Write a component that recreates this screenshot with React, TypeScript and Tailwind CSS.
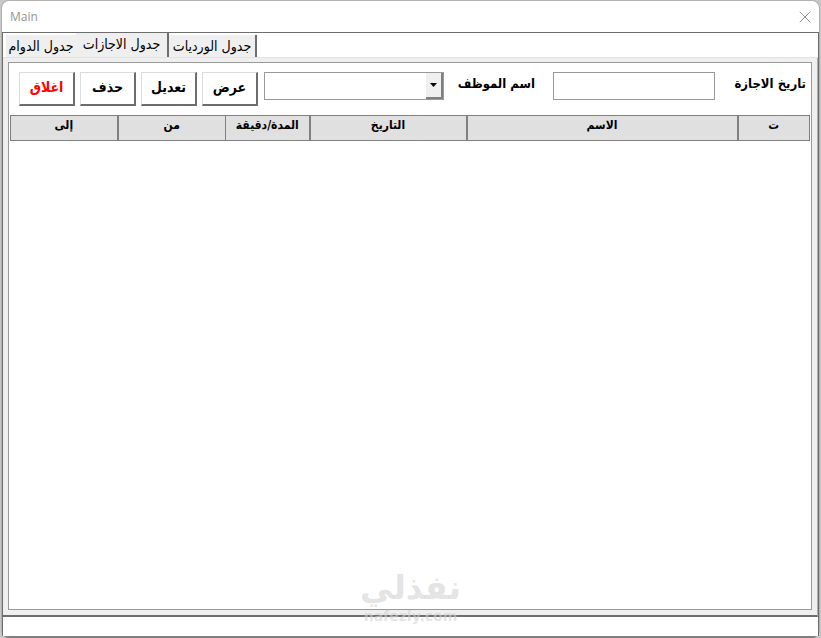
import { X } from "lucide-react";

const tabs = [
  { label: "جدول الدوام", active: false },
  { label: "جدول الاجازات", active: true },
  { label: "جدول الورديات", active: false },
];

const columns = [
  { label: "ت", className: "w-[72px] border-l-2" },
  { label: "الاسم", className: "w-auto border-l-2" },
  { label: "التاريخ", className: "w-[157px] border-l-2" },
  { label: "المدة/دقيقة", className: "w-[84px]" },
  { label: "من", className: "w-[108px] border-l-2" },
  { label: "إلى", className: "w-[107px]" },
];

function TitleBar() {
  return (
    <header className="flex h-[31px] items-center justify-between pr-1 pl-2">
      <h1 className="font-['Open_Sans',sans-serif] text-xs text-[#949494]">Main</h1>
      <button type="button" aria-label="Close" className="text-[#808080]">
        <X size={20} strokeWidth={1} />
      </button>
    </header>
  );
}

function Tabs() {
  return (
    <div role="tablist" className="flex h-[25px] items-end border-b border-[#e2e2e2] pl-[3px]">
      {tabs.map((tab) => (
        <button
          key={tab.label}
          type="button"
          role="tab"
          aria-selected={tab.active}
          dir="rtl"
          className={
            tab.active
              ? "h-6 w-[93px] border-r-2 border-[#6d6d6d] bg-[#efefef] pb-0.5 text-sm leading-4 whitespace-nowrap"
              : "h-[22px] w-[70px] bg-[#efefef] text-sm leading-4 whitespace-nowrap last:w-[88px] last:border-r-2 last:border-[#6d6d6d]"
          }
        >
          {tab.label}
        </button>
      ))}
    </div>
  );
}

function ToolButton({ label, danger }: { label: string; danger?: boolean }) {
  return (
    <button
      type="button"
      className={`h-[34px] w-14 shrink-0 border-t border-r-2 border-b-2 border-l border-t-[#dcdcdc] border-r-[#6d6d6d] border-b-[#6d6d6d] border-l-[#dcdcdc] bg-white pb-1 text-sm leading-5 font-bold ${
        danger ? "text-[#ff0000]" : "text-black"
      }`}
    >
      {label}
    </button>
  );
}

function Toolbar() {
  return (
    <div className="flex h-[52px] items-start pt-[9px] pr-1 pl-[9px]">
      <label htmlFor="date" className="mt-0.5 w-[75px] shrink-0 text-[13px] leading-5 font-bold whitespace-nowrap">
        تاريخ الاجازة
      </label>
      <input
        id="date"
        type="text"
        className="mr-4 h-7 min-w-0 flex-1 border border-[#999999] bg-white px-1 text-sm outline-none"
      />
      <label htmlFor="employee" className="mt-0.5 mr-[18px] w-[71px] shrink-0 text-[13px] leading-5 font-bold whitespace-nowrap">
        اسم الموظف
      </label>
      <div dir="ltr" className="relative mr-5 w-[180px] shrink-0">
        <select
          id="employee"
          className="block h-7 w-full appearance-none border border-[#999999] bg-white px-1 text-sm outline-none"
        >
          <option></option>
        </select>
        <span className="pointer-events-none absolute top-px right-px bottom-px flex w-[17px] items-center justify-center border-r-2 border-b-2 border-[#808080] bg-[#efefef]">
          <svg width="7" height="4" viewBox="0 0 7 4">
            <path d="M0 0h7L3.5 4z" fill="#000" />
          </svg>
        </span>
      </div>
      <div className="mr-[6px] flex gap-[5px]">
        <ToolButton label="عرض" />
        <ToolButton label="تعديل" />
        <ToolButton label="حذف" />
        <ToolButton label="اغلاق" danger />
      </div>
    </div>
  );
}

function LeaveTable() {
  return (
    <table className="w-full table-fixed border-collapse">
      <thead>
        <tr className="h-[25px] bg-[#e0e0e0]">
          {columns.map((col) => (
            <th
              key={col.label}
              scope="col"
              className={`${col.className} border border-[#808080] pb-1.5 text-xs leading-4 font-bold whitespace-nowrap`}
            >
              {col.label}
            </th>
          ))}
        </tr>
      </thead>
      <tbody></tbody>
    </table>
  );
}

function Watermark() {
  return (
    <div className="pointer-events-none absolute bottom-3 left-1/2 -translate-x-1/2 text-center font-['DejaVu_Sans',sans-serif] font-bold text-[#d2d2d2]/60">
      <div dir="rtl" className="text-[33px] leading-10">نفذلي</div>
      <div dir="ltr" className="text-sm leading-4">nafezly.com</div>
    </div>
  );
}

export default function App() {
  return (
    <div className="min-h-screen bg-[#c8c8c8] px-px font-['DejaVu_Sans_Condensed','DejaVu_Sans',sans-serif] text-black">
      <div className="relative flex min-h-screen flex-col rounded-lg border border-b-2 border-[#b0b0b0] border-b-[#808080] bg-white">
        <TitleBar />
        <main className="flex flex-1 flex-col border-x border-t border-[#6d6d6d]">
          <Tabs />
          <section className="flex flex-1 flex-col border-r border-b-2 border-r-[#b0b0b0] border-b-[#6d6d6d] bg-[#efefef] px-[5px] pt-1 pb-[5px]">
            <div dir="rtl" className="flex-1 border border-[#999999] bg-white px-px">
              <Toolbar />
              <LeaveTable />
            </div>
          </section>
          <footer className="h-[19px] bg-white"></footer>
        </main>
        <Watermark />
      </div>
    </div>
  );
}
